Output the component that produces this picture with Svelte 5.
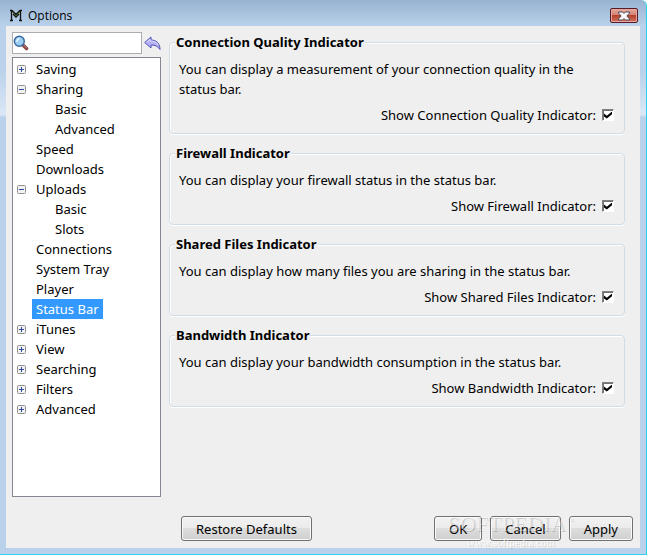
<script>
  let query = $state('');
  let selected = $state('Status Bar');

  let tree = $state([
    { label: 'Saving', open: false, children: ['Basic'] },
    { label: 'Sharing', open: true, children: ['Basic', 'Advanced'] },
    { label: 'Speed' },
    { label: 'Downloads' },
    { label: 'Uploads', open: true, children: ['Basic', 'Slots'] },
    { label: 'Connections' },
    { label: 'System Tray' },
    { label: 'Player' },
    { label: 'Status Bar' },
    { label: 'iTunes', open: false, children: ['Import'] },
    { label: 'View', open: false, children: ['Basic'] },
    { label: 'Searching', open: false, children: ['Basic'] },
    { label: 'Filters', open: false, children: ['Basic'] },
    { label: 'Advanced', open: false, children: ['Basic'] },
  ]);

  let groups = $state([
    {
      id: 'quality',
      title: 'Connection Quality Indicator',
      text: 'You can display a measurement of your connection quality in the status bar.',
      on: true,
    },
    {
      id: 'firewall',
      title: 'Firewall Indicator',
      text: 'You can display your firewall status in the status bar.',
      on: true,
    },
    {
      id: 'shared',
      title: 'Shared Files Indicator',
      text: 'You can display how many files you are sharing in the status bar.',
      on: true,
    },
    {
      id: 'bandwidth',
      title: 'Bandwidth Indicator',
      text: 'You can display your bandwidth consumption in the status bar.',
      on: true,
    },
  ]);

  function restore() {
    for (const g of groups) g.on = true;
  }
</script>

<div class="window">
  <header>
    <svg class="logo" viewBox="0 0 12 13" aria-hidden="true">
      <path d="M2 2l4 4 4-4v3L6 8 3 5z" fill="#8fc45a" />
      <path d="M0 11.5h3M1.5 11V2M0 1.5h2l4 4 4-4h2M10.5 2v9M9 11.5h3M3 5l3 3 3-3" fill="none" stroke="#111" stroke-width="1.3" />
    </svg>
    <h1>Options</h1>
    <button type="button" class="close" aria-label="Close">
      <svg viewBox="0 0 12 10" aria-hidden="true">
        <path d="M.5 1h4L6 2.500 7.500 1h4v1L8.800 5l2.700 3v1h-4L6 7.500 4.500 9h-4V8l2.700-3L.5 2z" fill="#fff" stroke="#4a4c5c" />
      </svg>
    </button>
  </header>

  <main>
    <aside>
      <div class="search">
        <div class="field">
          <svg viewBox="0 0 16 16" aria-hidden="true">
            <path d="M10 10l3.500 3.500" stroke="#8b4a48" stroke-width="3.600" stroke-linecap="round" />
            <path d="M10.500 9.800l3.200 3.200" stroke="#c08078" stroke-width="1" />
            <circle cx="6.300" cy="6.300" r="5" fill="#9ccdf2" stroke="#36669f" stroke-width="1.400" />
            <path d="M3 6.500C3 4 5 2.700 7.500 3.200 6 4 5 5 4.500 7z" fill="#e2f3ff" />
          </svg>
          <input type="text" bind:value={query} aria-label="Search options" />
        </div>
        <button type="button" class="back" aria-label="Clear search" onclick={() => (query = '')}>
          <svg viewBox="0 0 17 15" aria-hidden="true">
            <path d="M.7 6.500L7 1v3c5 0 9 3 9 9.500C14 10.500 11.500 9 7 9v3z" fill="#b3b0f5" stroke="#5451b5" stroke-linejoin="round" />
            <path d="M2.500 6.300L6 3.300V5c4 0 7 1.500 8 4" fill="none" stroke="#e0defe" />
          </svg>
        </button>
      </div>

      <ul class="tree">
        {#each tree as node}
          <li>
            <div class="row">
              {#if node.children}
                <button type="button" class="toggle" aria-label={node.label} aria-expanded={node.open} onclick={() => (node.open = !node.open)}>
                  <svg viewBox="0 0 9 9" aria-hidden="true">
                    <rect x=".5" y=".5" width="8" height="8" rx="1" fill="#f2f2f2" stroke="#919191" />
                    <path d={node.open ? 'M2 4.500h5' : 'M2 4.500h5M4.500 2v5'} stroke="#2f4ba0" />
                  </svg>
                </button>
              {:else}
                <span class="toggle"></span>
              {/if}
              <button type="button" class="item" class:selected={selected === node.label} onclick={() => (selected = node.label)}>{node.label}</button>
            </div>
            {#if node.open}
              <ul>
                {#each node.children as child}
                  <li class="row">
                    <button type="button" class="item" onclick={() => (selected = node.label + '/' + child)}>{child}</button>
                  </li>
                {/each}
              </ul>
            {/if}
          </li>
        {/each}
      </ul>
    </aside>

    <section>
      <div class="groups">
        {#each groups as group}
          <fieldset>
            <legend>{group.title}</legend>
            <p>{group.text}</p>
            <div class="option">
              <label for={group.id}>Show {group.title}:</label>
              <input type="checkbox" id={group.id} bind:checked={group.on} />
            </div>
          </fieldset>
        {/each}
      </div>

      <footer>
        <button type="button" class="btn restore" onclick={restore}>Restore Defaults</button>
        <button type="button" class="btn">OK</button>
        <button type="button" class="btn">Cancel</button>
        <button type="button" class="btn">Apply</button>
        <div class="watermark">
          <span class="brand">SOFTPEDIA<sup>™</sup></span>
          <span class="site">www.softpedia.com</span>
        </div>
      </footer>
    </section>
  </main>
</div>

<style>
  :global(body) {
    margin: 0;
  }
  .window {
    box-sizing: border-box;
    min-height: 100vh;
    display: flex;
    flex-direction: column;
    padding: 0 6px 6px;
    border-right: 1px solid #2fd0ee;
    border-bottom: 1px solid #2fd0ee;
    border-top-right-radius: 6px;
    background: linear-gradient(#98b3d1, #b9d1ea 26px, #b9d1ea 70px, #dbe8f6 115px, #b9d1ea 117px);
    color: #000;
    font: 13px/20px 'Noto Sans', 'Open Sans', sans-serif;
  }
  button,
  input {
    font: inherit;
    color: inherit;
  }
  button {
    padding: 0;
    border: none;
    background: none;
  }
  svg {
    display: block;
  }
  header {
    display: flex;
    align-items: center;
    gap: 6px;
    height: 26px;
    padding: 5px 2px 0 4px;
    box-sizing: border-box;
  }
  .logo {
    width: 12px;
    height: 13px;
  }
  h1 {
    margin: 0;
    flex: 1;
    font-family: 'Open Sans', sans-serif;
    font-size: 12px;
    font-weight: 400;
  }
  .close {
    display: flex;
    align-items: center;
    justify-content: center;
    box-sizing: border-box;
    width: 28px;
    height: 15px;
    border: 1px solid #571a26;
    border-radius: 2px;
    background: linear-gradient(#e5aaa0, #d38274 45%, #b5402a 50%, #cf7360);
    box-shadow: inset 0 0 0 1px #e6a89c;
  }
  .close svg {
    width: 12px;
    height: 10px;
  }
  main {
    flex: 1;
    display: flex;
    gap: 8px;
    padding: 6px;
    background: #efefef;
  }
  aside {
    display: flex;
    flex-direction: column;
    gap: 3px;
    width: 149px;
    padding-bottom: 45px;
  }
  .search {
    display: flex;
    align-items: center;
    gap: 2px;
  }
  .field {
    flex: 1;
    min-width: 0;
    display: flex;
    align-items: center;
    box-sizing: border-box;
    height: 22px;
    border: 1px solid #abadb3;
    background: #fff;
  }
  .field svg {
    flex: none;
    width: 16px;
    height: 16px;
  }
  .field input {
    flex: 1;
    min-width: 0;
    height: 18px;
    padding: 0 2px;
    border: none;
    outline: none;
    background: none;
  }
  .back svg {
    width: 17px;
    height: 15px;
  }
  ul {
    margin: 0;
    padding: 0;
    list-style: none;
  }
  .tree {
    flex: 1;
    padding: 1px 3px;
    border: 1px solid #828790;
    background: #fff;
  }
  .tree ul {
    padding-left: 35px;
  }
  .row {
    display: flex;
    align-items: center;
    height: 20px;
  }
  .toggle {
    width: 16px;
  }
  .toggle svg {
    width: 9px;
    height: 9px;
    margin-left: 1px;
  }
  .item {
    height: 20px;
    padding: 0 4px;
    white-space: nowrap;
  }
  .item.selected {
    background: #3399ff;
    color: #fff;
  }
  section {
    flex: 1;
    min-width: 0;
    display: flex;
    flex-direction: column;
    justify-content: space-between;
  }
  .groups {
    display: flex;
    flex-direction: column;
    gap: 9px;
    padding-right: 9px;
  }
  fieldset {
    min-width: 0;
    margin: 0;
    padding: 7px 10px 8px 9px;
    border: 1px solid #d0dce6;
    border-radius: 4px;
    box-shadow: inset 1px 1px #fff, 0 1px #fff;
  }
  legend {
    position: relative;
    margin-left: -4px;
    padding: 0 1px;
    background: #efefef;
    font-weight: 700;
  }
  p {
    margin: 0;
  }
  .option {
    display: flex;
    align-items: center;
    justify-content: flex-end;
    gap: 6px;
    margin-top: 6px;
  }
  .option input {
    appearance: none;
    display: grid;
    place-items: center;
    box-sizing: border-box;
    width: 12px;
    height: 12px;
    margin: 0;
    border: 1px solid;
    border-color: #808080 #fff #fff #808080;
    background: #fff;
    box-shadow: inset 1px 1px #707070;
  }
  .option input:checked::after {
    content: '';
    width: 8px;
    height: 7px;
    background: #000;
    clip-path: polygon(0 30%, 35% 60%, 100% 0, 100% 40%, 35% 100%, 0 70%);
  }
  footer {
    position: relative;
    display: flex;
    gap: 8px;
    padding: 0 1px 1px 12px;
  }
  .btn {
    box-sizing: border-box;
    height: 25px;
    padding: 0 14px;
    border: 1px solid #707070;
    border-radius: 3px;
    background: linear-gradient(#f2f2f2, #ebebeb 48%, #dddddd 50%, #cfcfcf);
    box-shadow: inset 0 0 0 1px #fafafa;
  }
  .restore {
    margin-right: auto;
  }
  .watermark {
    position: absolute;
    right: 60px;
    bottom: -6px;
    display: flex;
    flex-direction: column;
    align-items: center;
    color: rgba(255, 255, 255, 0.4);
    font-family: 'Liberation Serif', serif;
    text-shadow: 1px 1px rgba(0, 0, 0, 0.16);
    pointer-events: none;
  }
  .brand {
    font-size: 22px;
    line-height: 24px;
  }
  .brand sup {
    font-size: 8px;
    line-height: 8px;
  }
  .site {
    font-size: 11px;
    line-height: 12px;
    color: rgba(255, 255, 255, 0.9);
  }
</style>
